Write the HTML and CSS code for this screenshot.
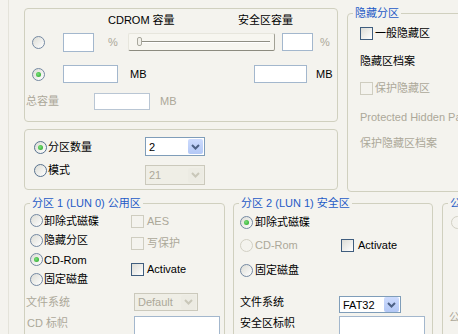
FILE: index.html
```html
<!DOCTYPE html>
<html lang="zh-CN">
<head>
  <meta charset="UTF-8">
  <title>分区设置</title>
  <link rel="stylesheet" href="styles.css">
</head>
<body>
<div class="page">
  <div class="top">
    <div class="left-col">
      <!-- 容量 -->
      <fieldset class="grp grp-size">
        <div class="row head"><span class="h-cd">CDROM 容量</span><span>安全区容量</span></div>
        <div class="row r1">
          <span class="radio"></span>
          <span class="edit e-pct"></span>
          <span class="unit dim u-pct">%</span>
          <div class="slider"><span class="thumb"></span></div>
          <span class="edit e-pct2"></span>
          <span class="unit dim u-pct2">%</span>
        </div>
        <div class="row r2">
          <span class="radio on"></span>
          <span class="edit e-mb"></span>
          <span class="unit u-mb">MB</span>
          <span class="edit e-mb2"></span>
          <span class="unit u-mb2">MB</span>
        </div>
        <div class="row r3">
          <span class="dim lbl-total">总容量</span>
          <span class="edit e-total"></span>
          <span class="unit dim u-total">MB</span>
        </div>
      </fieldset>

      <!-- 分区数量 -->
      <fieldset class="grp grp-count">
        <div class="cols">
          <div class="col-radios">
            <div class="opt"><span class="radio on"></span><span>分区数量</span></div>
            <div class="opt opt2"><span class="radio"></span><span>模式</span></div>
          </div>
          <div class="col-combos">
            <div class="combo c-count"><span>2</span><span class="btn"><svg width="9" height="6" viewBox="0 0 9 6"><path d="M1 1 L4.5 4.5 L8 1" fill="none" stroke="#4d6185" stroke-width="2"/></svg></span></div>
            <div class="combo dis c-mode"><span>21</span><span class="btn"><svg width="9" height="6" viewBox="0 0 9 6"><path d="M1 1 L4.5 4.5 L8 1" fill="none" stroke="#c9c7b9" stroke-width="2"/></svg></span></div>
          </div>
        </div>
      </fieldset>
    </div>

    <!-- 隐藏分区 -->
    <fieldset class="grp grp-hidden">
      <legend>隐藏分区</legend>
      <div class="hrow h1"><span class="check"></span><span>一般隐藏区</span></div>
      <div class="hrow h2"><span>隐藏区档案</span></div>
      <div class="hrow h3 dim"><span class="check dis"></span><span>保护隐藏区</span></div>
      <div class="hrow h4 dim"><span>Protected Hidden Password</span></div>
      <div class="hrow h5 dim"><span>保护隐藏区档案</span></div>
    </fieldset>
  </div>

  <div class="bottom">
    <!-- 分区 1 -->
    <fieldset class="grp grp-p1">
      <legend>分区 1 (LUN 0) 公用区</legend>
      <div class="cols">
        <div class="p1-radios">
          <div class="opt"><span class="radio"></span><span>卸除式磁碟</span></div>
          <div class="opt"><span class="radio"></span><span>隐藏分区</span></div>
          <div class="opt"><span class="radio on"></span><span>CD-Rom</span></div>
          <div class="opt"><span class="radio"></span><span>固定磁盘</span></div>
        </div>
        <div class="p1-checks">
          <div class="opt ck1 dim"><span class="check dis"></span><span>AES</span></div>
          <div class="opt ck2 dim"><span class="check dis"></span><span>写保护</span></div>
          <div class="opt ck3"><span class="check"></span><span>Activate</span></div>
        </div>
      </div>
      <div class="field f-fs">
        <span class="flabel dim">文件系统</span>
        <div class="combo dis c-def"><span>Default</span><span class="btn"><svg width="9" height="6" viewBox="0 0 9 6"><path d="M1 1 L4.5 4.5 L8 1" fill="none" stroke="#c9c7b9" stroke-width="2"/></svg></span></div>
      </div>
      <div class="field f-lbl">
        <span class="flabel dim">CD 标帜</span>
        <span class="edit e-lbl"></span>
      </div>
    </fieldset>

    <!-- 分区 2 -->
    <fieldset class="grp grp-p2">
      <legend>分区 2 (LUN 1) 安全区</legend>
      <div class="p2 p2r1"><span class="radio on"></span><span>卸除式磁碟</span></div>
      <div class="p2 p2r2">
        <span class="radio dis"></span><span class="dim p2-cd">CD-Rom</span>
        <span class="check"></span><span>Activate</span>
      </div>
      <div class="p2 p2r3"><span class="radio"></span><span>固定磁盘</span></div>
      <div class="field2 f2-fs">
        <span class="flabel2">文件系统</span>
        <div class="combo c-fat"><span>FAT32</span><span class="btn"><svg width="9" height="6" viewBox="0 0 9 6"><path d="M1 1 L4.5 4.5 L8 1" fill="none" stroke="#4d6185" stroke-width="2"/></svg></span></div>
      </div>
      <div class="field2 f2-lbl">
        <span class="flabel2">安全区标帜</span>
        <span class="edit e-lbl2"></span>
      </div>
    </fieldset>

    <!-- 分区 3 -->
    <fieldset class="grp grp-p3">
      <legend>公用区</legend>
      <div class="p2 p2r1"><span class="radio dis"></span><span class="dim">卸除式磁碟</span></div>
      <div class="p3-lbl dim">公用区标帜</div>
    </fieldset>
  </div>
</div>
</body>
</html>
```

FILE: styles.css
```css
body {
  margin: 0;
  width: 458px;
  height: 334px;
  overflow: hidden;
  background-color: #f4f3ee;
  font-family: "Liberation Sans", "Noto Sans CJK SC", sans-serif;
  font-size: 11px;
  line-height: 14px;
  color: #000;
}

.page {
  margin-left: 8px;
  padding-left: 15px;
  height: 334px;
  box-sizing: border-box;
  border-left: 1px solid #e4e3da;
}

.dim {
  color: #aca899;
}

/* group boxes */
.grp {
  margin: 0;
  padding: 0;
  min-width: 0;
  box-sizing: border-box;
  border: 1px solid #d0d0bf;
  border-radius: 4px;
  flex-shrink: 0;
}

.grp legend {
  padding: 0 2px;
  margin-left: 5px;
  line-height: 14px;
  color: #1f5bc6;
}

.top {
  display: flex;
  align-items: flex-start;
}

.left-col {
  width: 314px;
  padding-top: 8px;
  flex-shrink: 0;
}

/* controls */
.radio {
  position: relative;
  width: 13px;
  height: 13px;
  box-sizing: border-box;
  border: 1px solid #7489a2;
  border-radius: 50%;
  background: linear-gradient(135deg, #dcdcd5, #ffffff);
  flex-shrink: 0;
}

.radio.on::after {
  content: "";
  position: absolute;
  left: 3px;
  top: 3px;
  width: 5px;
  height: 5px;
  border-radius: 50%;
  background: radial-gradient(circle at 40% 40%, #7be07b, #21a121);
}

.radio.dis {
  border-color: #d2d0c4;
  background: #f4f3ee;
}

.check {
  width: 13px;
  height: 13px;
  box-sizing: border-box;
  border: 1px solid #3f5d7e;
  background: linear-gradient(135deg, #dcdcd6, #ffffff);
  flex-shrink: 0;
  margin-right: 2px;
}

.check.dis {
  border-color: #cfcdc0;
  background: #f4f3ee;
}

.edit {
  display: block;
  box-sizing: border-box;
  border: 1px solid #a3b7cd;
  background: #fff;
  flex-shrink: 0;
}

.combo {
  display: flex;
  align-items: center;
  box-sizing: border-box;
  height: 19px;
  padding-left: 3px;
  border: 1px solid #7f9db9;
  background: #fff;
  flex-shrink: 0;
}

.combo .btn {
  margin-left: auto;
  margin-right: 1px;
  width: 15px;
  height: 15px;
  border-radius: 2px;
  background: linear-gradient(#cddbfd, #b3c8f6);
  display: flex;
  align-items: center;
  justify-content: center;
}

.combo.dis {
  border-color: #cbc9bc;
  background: #efeee6;
  color: #aca899;
}

.combo.dis .btn {
  background: #ecebe3;
}

/* capacity group */
.grp-size {
  height: 114px;
}

.grp-size .row {
  display: flex;
  align-items: center;
  height: 22px;
}

.h-cd {
  margin-left: 83px;
  width: 130px;
}

.grp-size .radio {
  margin-left: 7px;
}

.e-pct {
  margin-left: 18px;
  width: 31px;
  height: 19px;
}

.u-pct {
  margin-left: 14px;
  width: 20px;
}

.slider {
  position: relative;
  width: 147px;
  height: 18px;
  box-sizing: border-box;
  border: 1px solid #e7e6dd;
  border-bottom-color: #8c8b7f;
  border-right-color: #a2a195;
  border-radius: 2px;
  background: #f7f6f0;
}

.slider::before {
  content: "";
  position: absolute;
  left: 12px;
  right: 4px;
  top: 7px;
  height: 1px;
  background: #8f8e83;
  box-shadow: 0 1px 0 #fff;
}

.thumb {
  position: absolute;
  left: 8px;
  top: 3px;
  width: 3px;
  height: 7px;
  border: 1px solid #a9a89d;
  border-radius: 2px;
  background: #f2f1ea;
}

.e-pct2 {
  margin-left: 7px;
  width: 31px;
  height: 18px;
}

.u-pct2 {
  margin-left: 7px;
}

.r2 {
  margin-top: 10px;
}

.e-mb {
  margin-left: 18px;
  width: 55px;
  height: 18px;
}

.u-mb {
  margin-left: 12px;
  width: 20px;
}

.e-mb2 {
  margin-left: 104px;
  width: 53px;
  height: 18px;
}

.u-mb2 {
  margin-left: 9px;
}

.r3 {
  margin-top: 5px;
}

.lbl-total {
  margin-left: 1px;
  width: 68px;
}

.e-total {
  width: 56px;
  height: 17px;
  border-color: #b9c6d4;
}

.u-total {
  margin-left: 10px;
}

/* partition count group */
.grp-count {
  margin-top: 7px;
  height: 61px;
}

.cols {
  display: flex;
}

.opt {
  display: flex;
  align-items: center;
  gap: 1px;
  height: 20px;
}

.col-radios {
  width: 120px;
  box-sizing: border-box;
  padding: 7px 0 0 9px;
}

.col-radios .opt .radio {
  border-color: #58728f;
}

.opt2 {
  margin-top: 3px;
}

.col-combos {
  padding-top: 7px;
}

.c-count {
  width: 60px;
}

.c-mode {
  width: 60px;
  height: 20px;
  margin-top: 9px;
}

/* hidden partition group */
.grp-hidden {
  margin-left: 9px;
  margin-top: 6px;
  width: 130px;
  height: 186px;
}

.hrow {
  display: flex;
  align-items: center;
  height: 20px;
  padding-left: 12px;
  white-space: nowrap;
}

.h1 {
  margin-top: 3px;
}

.h2 {
  margin-top: 8px;
}

.h3 {
  margin-top: 7px;
}

.h4 {
  margin-top: 9px;
}

.h5 {
  margin-top: 6px;
}

/* bottom partitions */
.bottom {
  display: flex;
  margin-top: 4px;
}

.grp-p1 {
  width: 201px;
  height: 160px;
}

.p1-radios {
  width: 106px;
  box-sizing: border-box;
  padding: 1px 0 0 5px;
}

.p1-radios .opt {
  height: 19.5px;
}

.p1-checks .ck1 {
  margin-top: 1px;
}

.p1-checks .ck2 {
  margin-top: 2px;
}

.p1-checks .ck3 {
  margin-top: 6px;
}

.field {
  display: flex;
  align-items: center;
}

.f-fs {
  margin-top: 3px;
  height: 20px;
}

.f-fs .flabel {
  padding-left: 1px;
  width: 108px;
}

.c-def {
  width: 64px;
  height: 18px;
}

.f-lbl {
  margin-top: 4px;
  align-items: flex-start;
}

.f-lbl .flabel {
  padding-left: 2px;
  width: 107px;
}

.e-lbl {
  width: 86px;
  height: 24px;
}

.grp-p2 {
  margin-left: 8px;
  width: 200px;
  height: 160px;
}

.p2 {
  display: flex;
  align-items: center;
  gap: 2px;
  height: 20px;
  padding-left: 6px;
}

.p2r1 {
  margin-top: 2px;
}

.p2r2 {
  margin-top: 3px;
}

.p2-cd {
  width: 84px;
}

.p2r3 {
  margin-top: 5px;
}

.field2 {
  display: flex;
  align-items: flex-start;
  padding-left: 6px;
}

.flabel2 {
  width: 99px;
}

.f2-fs {
  margin-top: 15px;
}

.c-fat {
  width: 62px;
  height: 17px;
  margin-top: 1px;
}

.f2-lbl {
  margin-top: 3px;
}

.e-lbl2 {
  width: 86px;
  height: 24px;
}

.grp-p3 {
  margin-left: 9px;
  width: 60px;
  height: 160px;
}

.grp-p3 .p2 {
  padding-left: 8px;
}

.p3-lbl {
  margin-top: 78px;
  padding-left: 6px;
  white-space: nowrap;
}
```
